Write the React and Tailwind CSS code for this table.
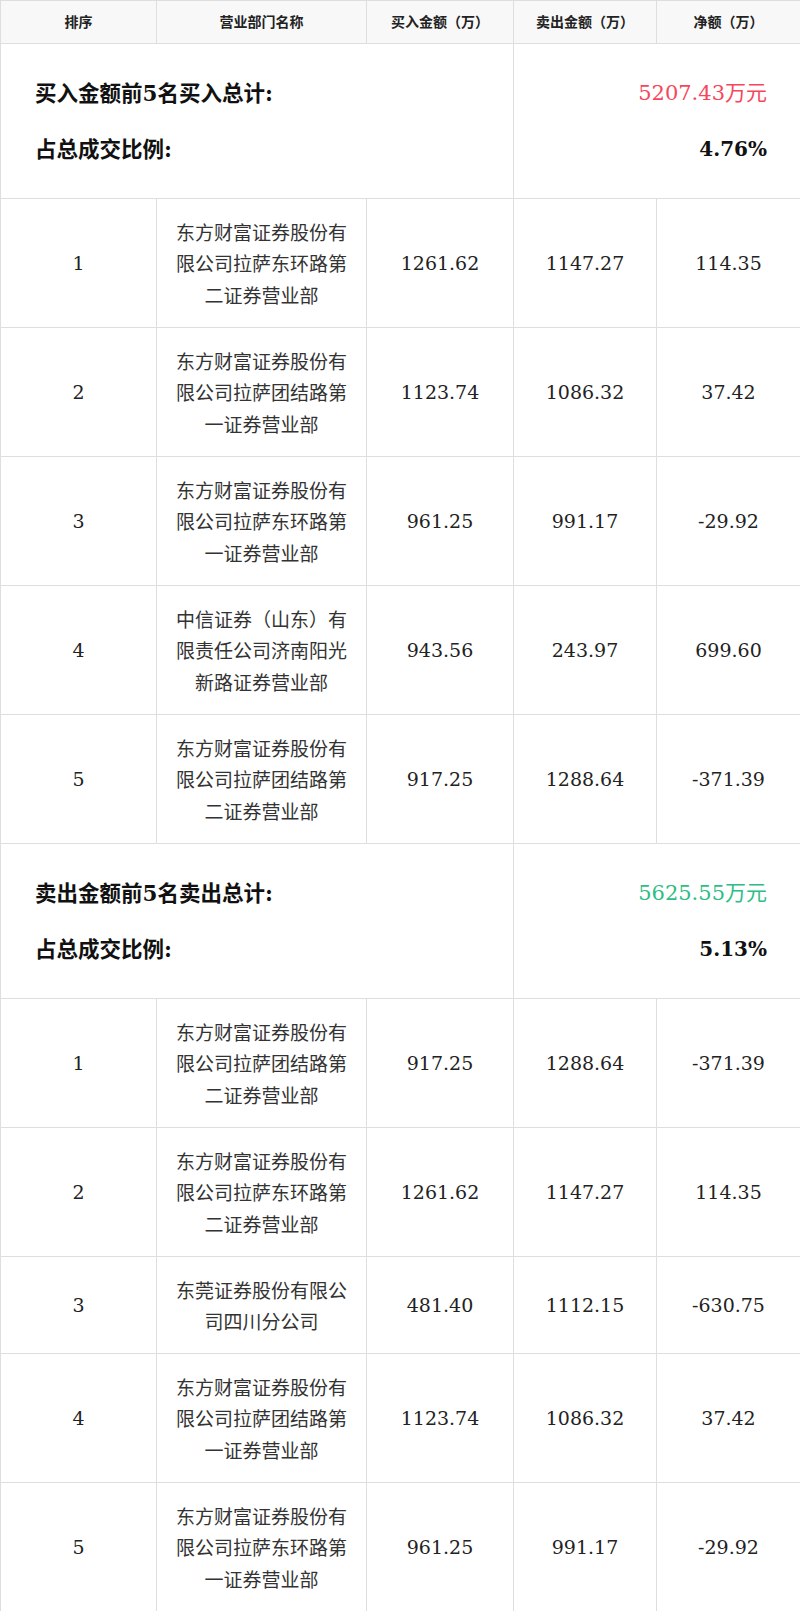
import React from "react";

const serif = "font-['DejaVu_Serif','Noto_Sans_CJK_SC',serif]";

const buyRows = [
  ["1", "东方财富证券股份有限公司拉萨东环路第二证券营业部", "1261.62", "1147.27", "114.35"],
  ["2", "东方财富证券股份有限公司拉萨团结路第一证券营业部", "1123.74", "1086.32", "37.42"],
  ["3", "东方财富证券股份有限公司拉萨东环路第一证券营业部", "961.25", "991.17", "-29.92"],
  ["4", "中信证券（山东）有限责任公司济南阳光新路证券营业部", "943.56", "243.97", "699.60"],
  ["5", "东方财富证券股份有限公司拉萨团结路第二证券营业部", "917.25", "1288.64", "-371.39"],
];

const sellRows = [
  ["1", "东方财富证券股份有限公司拉萨团结路第二证券营业部", "917.25", "1288.64", "-371.39"],
  ["2", "东方财富证券股份有限公司拉萨东环路第二证券营业部", "1261.62", "1147.27", "114.35"],
  ["3", "东莞证券股份有限公司四川分公司", "481.40", "1112.15", "-630.75"],
  ["4", "东方财富证券股份有限公司拉萨团结路第一证券营业部", "1123.74", "1086.32", "37.42"],
  ["5", "东方财富证券股份有限公司拉萨东环路第一证券营业部", "961.25", "991.17", "-29.92"],
];

const Summary = ({ title, total, ratio, color }) => (
  <tr className="h-[155px]">
    <td colSpan={3} className="border border-[#dedede] pl-[34px] align-middle">
      <div className="flex flex-col gap-[29px] text-[21.5px] font-bold text-[#111] leading-[27px]">
        <span>{title}</span>
        <span>占总成交比例:</span>
      </div>
    </td>
    <td colSpan={2} className="border border-[#dedede] pr-[33px] align-middle text-right">
      <div className="flex flex-col gap-[29px] leading-[27px]">
        <span className={`text-[21px] ${color}`}>{total}</span>
        <span className="text-[20px] font-bold text-[#111]">{ratio}</span>
      </div>
    </td>
  </tr>
);

const Row = ({ r }) => (
  <tr className={r[1].length > 18 ? "h-[129px]" : "h-[97px]"}>
    <td className="border border-[#dedede] text-center text-[19px] text-[#222]">{r[0]}</td>
    <td className="border border-[#dedede] px-[17px] text-center text-[19px] leading-[31.5px] text-[#333] font-['Noto_Sans_CJK_SC',sans-serif]">
      {r[1]}
    </td>
    <td className="border border-[#dedede] text-center text-[19px] text-[#222]">{r[2]}</td>
    <td className="border border-[#dedede] text-center text-[19px] text-[#222]">{r[3]}</td>
    <td className="border border-[#dedede] text-center text-[19px] text-[#222]">{r[4]}</td>
  </tr>
);

export default function App() {
  return (
    <div className={`w-[800px] bg-white ${serif}`}>
      <table className="w-[800px] table-fixed border-collapse">
        <colgroup>
          <col className="w-[156px]" />
          <col className="w-[210px]" />
          <col className="w-[147px]" />
          <col className="w-[143px]" />
          <col className="w-[144px]" />
        </colgroup>
        <thead>
          <tr className="h-[43px] bg-[#f8f8f8]">
            {["排序", "营业部门名称", "买入金额（万）", "卖出金额（万）", "净额（万）"].map((h) => (
              <th key={h} className="border border-[#dedede] text-center text-[14px] font-bold text-[#222]">
                {h}
              </th>
            ))}
          </tr>
        </thead>
        <tbody>
          <Summary title="买入金额前5名买入总计:" total="5207.43万元" ratio="4.76%" color="text-[#f5475b]" />
          {buyRows.map((r, i) => (
            <Row key={"b" + i} r={r} />
          ))}
          <Summary title="卖出金额前5名卖出总计:" total="5625.55万元" ratio="5.13%" color="text-[#2ebd85]" />
          {sellRows.map((r, i) => (
            <Row key={"s" + i} r={r} />
          ))}
        </tbody>
      </table>
    </div>
  );
}
